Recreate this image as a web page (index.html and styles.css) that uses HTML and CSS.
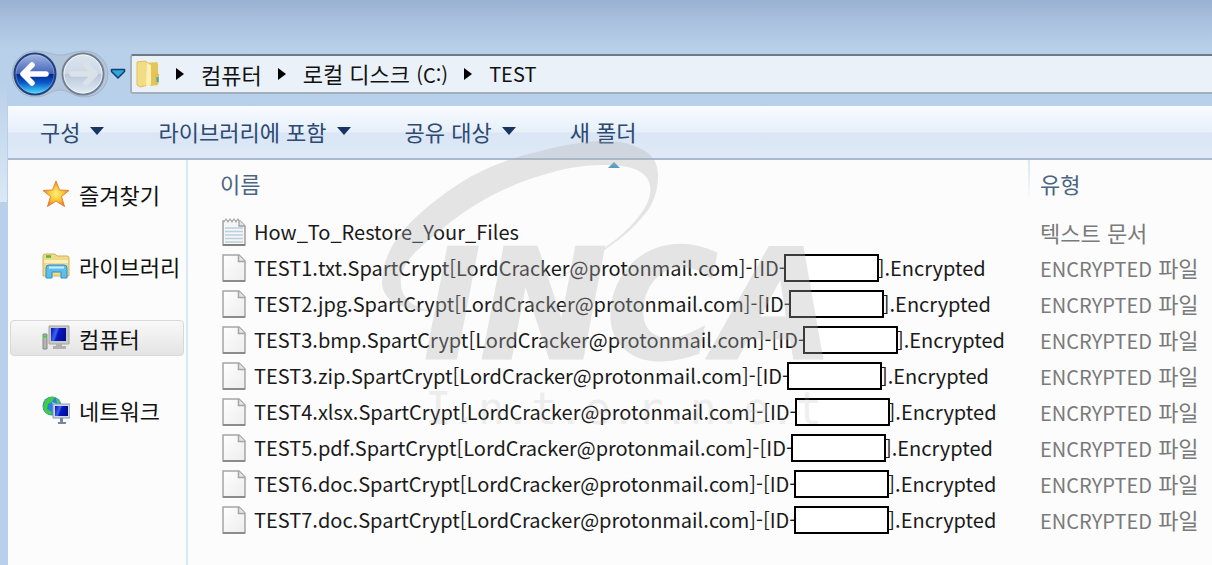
FILE: index.html
```
<!DOCTYPE html>
<html lang="ko">

<head>
    <meta charset="UTF-8">
    <meta name="viewport" content="width=device-width, initial-scale=1.0">
    <title>TEST</title>
    <link rel="stylesheet" href="styles.css">
</head>

<body>

    <!-- Shared icons -->
    <svg class="defs" width="0" height="0" aria-hidden="true">
        <defs>
            <linearGradient id="paper" x1="0" y1="0" x2="1" y2="1">
                <stop offset="0" stop-color="#ffffff" />
                <stop offset="1" stop-color="#eeecec" />
            </linearGradient>
            <linearGradient id="screenBlue" x1="0" y1="0" x2="1" y2="0.3">
                <stop offset="0" stop-color="#0711a8" />
                <stop offset="0.4" stop-color="#3a66f0" />
                <stop offset="0.55" stop-color="#0a18c0" />
                <stop offset="1" stop-color="#050d98" />
            </linearGradient>
            <symbol id="file" viewBox="0 0 24 28">
                <path d="M1 1h16l6 6v20H1z" fill="url(#paper)" stroke="#a5a5a5" stroke-width="1.5" />
                <path d="M16.5 1v6.5H23" fill="#e4e4e4" stroke="#a5a5a5" stroke-width="1.5" />
                <path d="M1 27h22" stroke="#7d7d7d" stroke-width="1.5" />
            </symbol>
            <symbol id="notes" viewBox="0 0 24 28">
                <path d="M1 3h17l5 5v19H1z" fill="#f3f5f7" stroke="#a0a0a0" stroke-width="1.5" />
                <path d="M3 10h18M3 13.5h18M3 17h18M3 20.5h18M3 24h18" stroke="#bccfdd" stroke-width="1.3" />
                <path d="M2 4l2-3 2 3 2-3 2 3 2-3 2 3 2-3 2 3" fill="#fff" stroke="#a9a9a9" stroke-width="1.2" />
                <path d="M17 2v6h6" fill="#e4e4e4" stroke="#a0a0a0" stroke-width="1.3" />
                <path d="M1 27h22" stroke="#6f6f6f" stroke-width="1.5" />
            </symbol>
        </defs>
    </svg>

    <div class="window">
        <header class="address-row">
            <div class="history">
                <svg class="history-plate" viewBox="0 0 98 48" aria-hidden="true">
                    <path d="M24 1C36 1 40 5 49 5S62 1 74 1a23 23 0 0 1 0 46C62 47 58 40 49 40S36 47 24 47A23 23 0 0 1 24 1z" fill="#a9b9cc" fill-opacity="0.5" stroke="#8595a8" stroke-opacity="0.4" />
                </svg>
                <button class="round" aria-label="뒤로">
                    <svg viewBox="0 0 44 44">
                        <defs>
                            <linearGradient id="backTop" x1="0" y1="0" x2="0" y2="1">
                                <stop offset="0" stop-color="#a8b8e4" />
                                <stop offset="0.5" stop-color="#4064b8" />
                                <stop offset="0.51" stop-color="#04248c" />
                                <stop offset="0.72" stop-color="#0a5ccc" />
                                <stop offset="1" stop-color="#4fe8ff" />
                            </linearGradient>
                        </defs>
                        <circle cx="22" cy="22" r="20.5" fill="url(#backTop)" stroke="#24407c" stroke-width="2" />
                        <circle cx="22" cy="22" r="19" fill="none" stroke="#b8cdf0" stroke-opacity="0.4" />
                        <path d="M10 22l9-9M10 22l9 9M11 22h22" fill="none" stroke="#fff" stroke-width="5.5" stroke-linecap="round" />
                    </svg>
                </button>
                <button class="round" aria-label="앞으로">
                    <svg viewBox="0 0 44 44">
                        <defs>
                            <linearGradient id="forwardFill" x1="0" y1="0" x2="0" y2="1">
                                <stop offset="0" stop-color="#dbe4ee" />
                                <stop offset="0.5" stop-color="#ccd9e6" />
                                <stop offset="0.51" stop-color="#b8c7d8" />
                                <stop offset="1" stop-color="#e2ecf8" />
                            </linearGradient>
                        </defs>
                        <circle cx="22" cy="22" r="20.5" fill="url(#forwardFill)" stroke="#74808f" stroke-width="2" />
                        <circle cx="22" cy="22" r="19" fill="none" stroke="#fff" stroke-opacity="0.7" />
                        <path d="M34 22l-9-9M34 22l-9 9M33 22H11" fill="none" stroke="#dbe1e8" stroke-width="5.5" stroke-linecap="round" />
                    </svg>
                </button>
                <button class="recent" aria-label="최근 페이지">
                    <svg viewBox="0 0 16 12">
                        <path d="M1.5 1.5h13v2L8 10 1.5 3.5z" fill="#2fa6dc" stroke="#123e70" stroke-width="1.5" stroke-linejoin="round" />
                    </svg>
                </button>
            </div>
            <nav class="path" aria-label="주소">
                <svg class="folder" viewBox="0 0 24 28" aria-hidden="true">
                    <path d="M9 3l12-1 1 2v21l-8 1z" fill="#e6c558" />
                    <path d="M1 2l8-1 3 2v22l-8 2-3-2z" fill="#f2dc84" stroke="#dcc05e" />
                    <path d="M11 3l4 2v20l-5 2z" fill="#fbf0b5" />
                    <path d="M19 13l4 1v9l-4 2z" fill="#e0c050" />
                    <path d="M21.5 17v5" stroke="#45a5c8" stroke-width="2" />
                </svg>
                <span class="crumb-arrow"></span>
                <a href="#">컴퓨터</a>
                <span class="crumb-arrow"></span>
                <a href="#">로컬 디스크 <span class="latin">(C:)</span></a>
                <span class="crumb-arrow"></span>
                <a href="#" class="latin">TEST</a>
            </nav>
        </header>

        <div class="toolbar">
            <button>구성<span class="caret"></span></button>
            <button>라이브러리에 포함<span class="caret"></span></button>
            <button>공유 대상<span class="caret"></span></button>
            <button>새 폴더</button>
        </div>

        <div class="content">
            <nav class="sidebar" aria-label="탐색">
                <a href="#">
                    <svg viewBox="0 0 28 28" aria-hidden="true">
                        <defs>
                            <radialGradient id="gold">
                                <stop offset="0" stop-color="#fff27a" />
                                <stop offset="0.6" stop-color="#fbc02e" />
                                <stop offset="1" stop-color="#ee7f1c" />
                            </radialGradient>
                        </defs>
                        <path d="M14 1l3.5 9 9.5.5-7.5 6 3 10-8.5-5.5-8.5 5.5 3-10-7.5-6 9.500-.5z" fill="url(#gold)" stroke="#df8040" stroke-linejoin="round" />
                    </svg>
                    즐겨찾기
                </a>
                <a href="#">
                    <svg viewBox="0 0 28 28" aria-hidden="true">
                        <path d="M1 4q0-2 2-2h10l2 2h10q2 0 2 2v18H1z" fill="#efd98a" stroke="#cdb35c" />
                        <path d="M2 8h24v3H2z" fill="#fbf0bd" />
                        <path d="M4 4.5h5" stroke="#4fb83a" stroke-width="2.5" />
                        <path d="M4 26V16q0-3 3-3h15q3 0 3 3v10h-6v-6h-9v6z" fill="#63bdea" stroke="#2f8dc6" />
                        <path d="M7 15.5h15" stroke="#c9efff" stroke-width="2" />
                    </svg>
                    라이브러리
                </a>
                <a href="#" class="selected">
                    <svg viewBox="0 0 28 28" aria-hidden="true">
                        <path d="M1 10h4v15H1z" fill="#b4b4b4" stroke="#888" />
                        <path d="M1 12.5h4" stroke="#3fd03a" stroke-width="2" />
                        <path d="M7 2h20v18H7z" fill="#c8c8c4" stroke="#a4a4a0" />
                        <path d="M9 4h15v13H9z" fill="url(#screenBlue)" />
                        <path d="M14 20h6v2h4v3H11v-3h3z" fill="#b0b0b0" />
                    </svg>
                    컴퓨터
                </a>
                <a href="#">
                    <svg viewBox="0 0 28 28" aria-hidden="true">
                        <circle cx="10" cy="10" r="9.5" fill="#2b7fe0" />
                        <path d="M3 5q4-5 10-4l-3 5-4 2-1 5 5 3-1 3Q2 18 1 11z" fill="#3fcf3a" />
                        <path d="M10 6l5 2-3 4z" fill="#8ae4f8" />
                        <path d="M14 2q4 2 5 5l-4 1z" fill="#48c860" />
                        <path d="M11 8h17v14H11z" fill="#d2d8e4" stroke="#8c98b4" />
                        <path d="M13 10h13v10H13z" fill="url(#screenBlue)" />
                        <path d="M18 22h3v4h3v2h-8v-2h2z" fill="#7886a4" />
                    </svg>
                    네트워크
                </a>
            </nav>

            <main class="files">
                <table>
                    <thead>
                        <tr>
                            <th class="name">이름<span class="sort"></span></th>
                            <th class="type">유형</th>
                        </tr>
                    </thead>
                    <tbody>
                        <tr>
                            <td><div class="file"><svg><use href="#notes" /></svg>How_To_Restore_Your_Files</div></td>
                            <td>텍스트 문서</td>
                        </tr>
                        <tr>
                            <td><div class="file"><svg><use href="#file" /></svg>TEST1.txt.SpartCrypt[LordCracker@protonmail.com]-[ID-<span class="hidden-id"></span>].Encrypted</div></td>
                            <td><span class="latin">ENCRYPTED</span> 파일</td>
                        </tr>
                        <tr>
                            <td><div class="file"><svg><use href="#file" /></svg>TEST2.jpg.SpartCrypt[LordCracker@protonmail.com]-[ID-<span class="hidden-id"></span>].Encrypted</div></td>
                            <td><span class="latin">ENCRYPTED</span> 파일</td>
                        </tr>
                        <tr>
                            <td><div class="file"><svg><use href="#file" /></svg>TEST3.bmp.SpartCrypt[LordCracker@protonmail.com]-[ID-<span class="hidden-id"></span>].Encrypted</div></td>
                            <td><span class="latin">ENCRYPTED</span> 파일</td>
                        </tr>
                        <tr>
                            <td><div class="file"><svg><use href="#file" /></svg>TEST3.zip.SpartCrypt[LordCracker@protonmail.com]-[ID-<span class="hidden-id"></span>].Encrypted</div></td>
                            <td><span class="latin">ENCRYPTED</span> 파일</td>
                        </tr>
                        <tr>
                            <td><div class="file"><svg><use href="#file" /></svg>TEST4.xlsx.SpartCrypt[LordCracker@protonmail.com]-[ID-<span class="hidden-id"></span>].Encrypted</div></td>
                            <td><span class="latin">ENCRYPTED</span> 파일</td>
                        </tr>
                        <tr>
                            <td><div class="file"><svg><use href="#file" /></svg>TEST5.pdf.SpartCrypt[LordCracker@protonmail.com]-[ID-<span class="hidden-id"></span>].Encrypted</div></td>
                            <td><span class="latin">ENCRYPTED</span> 파일</td>
                        </tr>
                        <tr>
                            <td><div class="file"><svg><use href="#file" /></svg>TEST6.doc.SpartCrypt[LordCracker@protonmail.com]-[ID-<span class="hidden-id"></span>].Encrypted</div></td>
                            <td><span class="latin">ENCRYPTED</span> 파일</td>
                        </tr>
                        <tr>
                            <td><div class="file"><svg><use href="#file" /></svg>TEST7.doc.SpartCrypt[LordCracker@protonmail.com]-[ID-<span class="hidden-id"></span>].Encrypted</div></td>
                            <td><span class="latin">ENCRYPTED</span> 파일</td>
                        </tr>
                    </tbody>
                </table>
            </main>
        </div>
    </div>

    <!-- Watermark over the window -->
    <svg class="watermark" viewBox="0 0 460 300">
        <path d="M48 171C22 170 0 162 0 142C0 120 12 98 31 80C48 64 66 50 88 37C110 25 132 17 155 12C180 5 202 1 221 1C236 1 246 3 255 7C270 13 276 22 276 36C276 48 273 58 268 67C258 82 243 96 225 108C207 122 190 132 168 142C190 131 207 119 225 106C242 94 256 80 265 64C272 48 268 36 255 30C246 26 234 25 221 25C210 25 200 26 188 28C164 33 143 40 121 50C97 61 75 76 55 93C36 109 22 120 19 138C17 156 28 166 48 171z" />
        <text class="mark-name" x="42" y="218">INCA</text>
        <text class="mark-sub" x="43" y="284">I.n.t.e.r.n.e.t</text>
    </svg>

</body>

</html>
```
FILE: styles.css
```
body {
    margin: 0;
    min-height: 100vh;
    background: #b9d0ea;
    font-family: "Noto Sans CJK KR", sans-serif;
    font-size: 22px;
    line-height: 36px;
    color: #111;
    overflow: hidden;
}

a {
    color: inherit;
    text-decoration: none;
}

button {
    padding: 0;
    border: none;
    background: none;
    font: inherit;
    color: inherit;
    cursor: pointer;
}

.defs {
    position: absolute;
}

.latin {
    font-size: 20px;
}

/* Window frame */
.window {
    display: flex;
    flex-direction: column;
    min-height: 100vh;
    box-sizing: border-box;
    padding: 50px 0 0 8px;
    background:
        linear-gradient(#b9d0ea, #dbe8f5) 0 80px / 7px 122px no-repeat,
        linear-gradient(#9ab2d2, #a9c0de 20px, #b9d0ea 50px);
}

/* Back, forward and address bar */
.address-row {
    display: flex;
    align-items: center;
    gap: 4px;
    height: 48px;
    margin-bottom: 8px;
}

.history {
    position: relative;
    display: flex;
    align-items: center;
    gap: 4px;
    padding-left: 5px;
}

.history-plate {
    position: absolute;
    left: 3px;
    top: -2px;
    width: 98px;
    height: 48px;
}

.round {
    position: relative;
    width: 44px;
    height: 44px;
}

.round svg,
.recent svg {
    display: block;
}

.recent {
    width: 16px;
    height: 12px;
    margin-left: 1px;
}

.path {
    flex: 1;
    display: flex;
    align-items: center;
    height: 36px;
    padding-left: 4px;
    background: #eaf1f9;
    border: 2px solid #a4afbe;
    border-top-color: #6f7883;
    border-right: none;
    border-radius: 3px 0 0 3px;
}

.folder {
    width: 24px;
    height: 28px;
}

.crumb-arrow {
    margin: 0 17px 0 16px;
    border: 6px solid transparent;
    border-left: 8px solid #000;
    border-right: none;
}

/* Command bar */
.toolbar {
    display: flex;
    align-items: center;
    gap: 54px;
    height: 50px;
    padding: 0 0 2px 32px;
    color: #2d4a70;
    background: linear-gradient(#f8fbff, #e6effa 50%, #dae6f5 52%, #dfe9f7);
    border-bottom: 2px solid #a8b8d0;
}

.toolbar button {
    display: flex;
    align-items: center;
    gap: 10px;
}

.caret {
    border: 7px solid transparent;
    border-top: 8px solid #16365f;
    border-bottom: none;
}

.content {
    flex: 1;
    display: flex;
    background: #fcfcfc;
}

/* Navigation pane */
.sidebar {
    display: flex;
    flex-direction: column;
    gap: 36px;
    width: 176px;
    padding: 16px 0 0 2px;
    border-right: 2px solid #d9e6f5;
}

.sidebar a {
    display: flex;
    align-items: center;
    gap: 9px;
    height: 34px;
    margin-right: 2px;
    padding-left: 31px;
    border: 1px solid transparent;
    border-radius: 4px;
    white-space: nowrap;
}

.sidebar svg {
    flex: none;
    width: 28px;
    height: 28px;
}

.sidebar .selected {
    background: linear-gradient(#f8f8f8, #e4e4e4);
    border-color: #d8d8d8;
}

/* File list */
.files {
    flex: 1;
}

table {
    width: 100%;
    border-collapse: collapse;
    table-layout: fixed;
}

th {
    position: relative;
    height: 45px;
    padding: 0 0 9px 32px;
    font-weight: normal;
    text-align: left;
    color: #4c6580;
}

th.type {
    width: 172px;
    padding-left: 12px;
    background: linear-gradient(#d9e6f5, #fcfcfc) left top / 2px 42px no-repeat;
}

.sort {
    position: absolute;
    left: 50%;
    top: 2px;
    border: 6px solid transparent;
    border-top: none;
    border-bottom: 6px solid #5a9cc0;
}

td {
    height: 36px;
    padding: 0 0 0 12px;
    line-height: 30px;
    color: #7a7a7a;
    white-space: nowrap;
}

.file {
    display: flex;
    align-items: center;
    padding-left: 22px;
    font-size: 20px;
    color: #1a1a1a;
}

.file svg {
    width: 24px;
    height: 28px;
    margin-right: 8px;
}

.hidden-id {
    width: 91px;
    height: 24px;
    margin: 0 -1px 0 -2px;
    background: #fff;
    border: 2px solid #000;
}

/* Watermark */
.watermark {
    position: absolute;
    left: 382px;
    top: 140px;
    width: 460px;
    height: 300px;
    fill: #b4b4b4;
    opacity: 0.33;
    pointer-events: none;
}

.mark-name {
    font: italic bold 151px "DejaVu Sans", sans-serif;
    stroke: #b4b4b4;
    stroke-width: 3px;
}

.mark-sub {
    font: 44px "DejaVu Sans Mono", monospace;
    opacity: 0.6;
}
```
